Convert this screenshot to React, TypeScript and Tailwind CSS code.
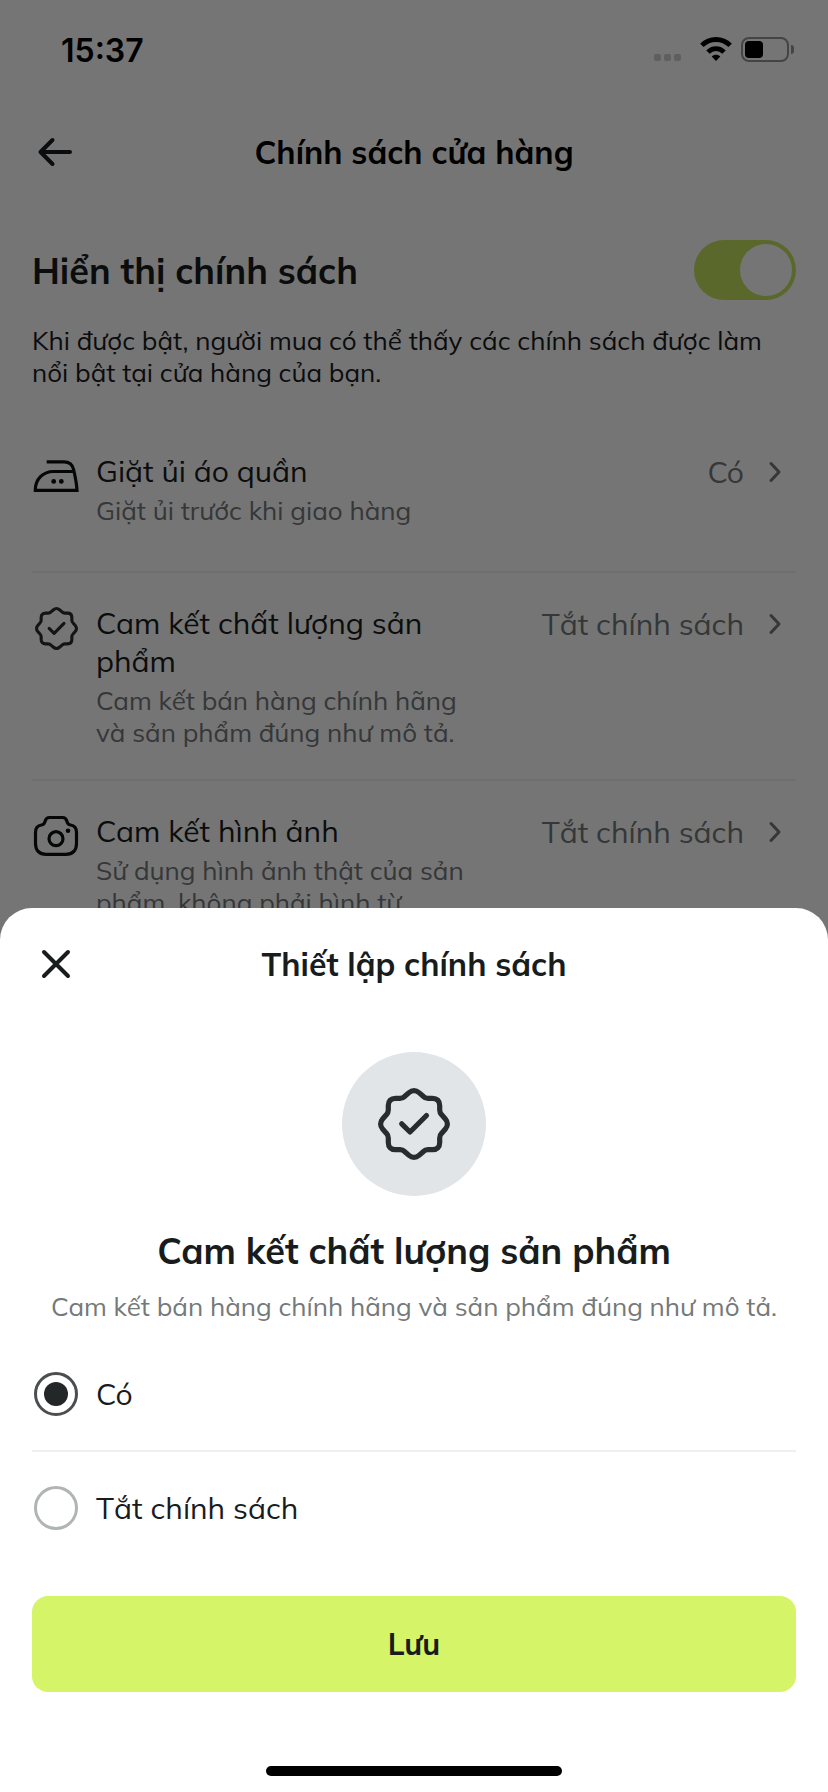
import React, { useState } from 'react';
import clsx from 'clsx';

interface IconProps {
  className?: string;
}

interface Policy {
  id: string;
  title: string;
  description: string;
  value: string;
  icon: React.FC<IconProps>;
}

const BadgeCheckIcon: React.FC<IconProps> = ({ className }) => (
  <svg
    viewBox="0 0 72 72"
    fill="none"
    stroke="currentColor"
    strokeWidth="5.2"
    strokeLinecap="round"
    strokeLinejoin="round"
    className={className}
  >
    <path d="M36 2.6C38 2.6 39.6 3.4 41 4.6L45.2 8.3C46.5 9.6 48 10.3 50 10.3H54.5C59 10.3 61.7 13 61.7 17.5V22C61.7 24 62.4 25.5 63.7 26.8L67.4 31C68.6 32.4 69.4 34 69.4 36C69.4 38 68.6 39.6 67.4 41L63.7 45.2C62.4 46.5 61.7 48 61.7 50V54.5C61.7 59 59 61.7 54.5 61.7H50C48 61.7 46.5 62.4 45.2 63.7L41 67.4C39.6 68.6 38 69.4 36 69.4C34 69.4 32.4 68.6 31 67.4L26.8 63.7C25.5 62.4 24 61.7 22 61.7H17.5C13 61.7 10.3 59 10.3 54.5V50C10.3 48 9.6 46.5 8.3 45.2L4.6 41C3.4 39.6 2.6 38 2.6 36C2.6 34 3.4 32.4 4.6 31L8.3 26.8C9.6 25.5 10.3 24 10.3 22V17.5C10.3 13 13 10.3 17.5 10.3H22C24 10.3 25.5 9.6 26.8 8.3L31 4.6C32.4 3.4 34 2.6 36 2.6Z" />
    <path d="M23.7 35.8L32 44L48.5 27.5" />
  </svg>
);

const SmallBadgeIcon: React.FC<IconProps> = ({ className }) => (
  <span className={clsx('flex items-center justify-center text-[#282c2e]', className)}>
    <BadgeCheckIcon className="h-[43px] w-[43px]" />
  </span>
);

const IronIcon: React.FC<IconProps> = ({ className }) => (
  <svg viewBox="0 0 48 48" fill="none" stroke="currentColor" strokeWidth="3.2" className={className}>
    <path d="M14.7 9.9H32C37 9.9 40.5 12.8 41.6 17.5C43 23.5 44.6 31 45 38.3H3.3C3.3 27 11 19.5 21.5 19.5H42.5" />
    <circle cx="21.7" cy="29.4" r="2.4" fill="currentColor" stroke="none" />
    <circle cx="29.3" cy="29.4" r="2.4" fill="currentColor" stroke="none" />
  </svg>
);

const CameraIcon: React.FC<IconProps> = ({ className }) => (
  <svg viewBox="0 0 48 48" fill="none" stroke="currentColor" strokeWidth="3.2" className={className}>
    <path d="M17.5 5.5H30.5C33 5.5 34.3 7 34.8 9C35.3 11.5 36.5 12.8 38.5 13C42.5 13.5 44.5 16.5 44.5 20.5V31.5C44.5 38.5 40.5 42.3 34 42.3H14C7.5 42.3 3.5 38.5 3.5 31.5V20.5C3.5 16.5 5.5 13.5 9.5 13C11.5 12.8 12.7 11.5 13.2 9C13.7 7 15 5.5 17.5 5.5Z" />
    <circle cx="24" cy="26.7" r="7" />
    <circle cx="36" cy="18.7" r="2.3" fill="currentColor" stroke="none" />
  </svg>
);

const policies: Policy[] = [
  {
    id: 'laundry',
    title: 'Giặt ủi áo quần',
    description: 'Giặt ủi trước khi giao hàng',
    value: 'Có',
    icon: IronIcon,
  },
  {
    id: 'quality',
    title: 'Cam kết chất lượng sản phẩm',
    description: 'Cam kết bán hàng chính hãng và sản phẩm đúng như mô tả.',
    value: 'Tắt chính sách',
    icon: SmallBadgeIcon,
  },
  {
    id: 'photos',
    title: 'Cam kết hình ảnh',
    description: 'Sử dụng hình ảnh thật của sản phẩm, không phải hình từ internet.',
    value: 'Tắt chính sách',
    icon: CameraIcon,
  },
];

const options = ['Có', 'Tắt chính sách'];

const StatusBar: React.FC = () => (
  <div className="flex h-[98px] items-center justify-between pr-[34px] pl-[61px] text-black">
    <span className="pt-[3px] font-['Inter',sans-serif] text-[32px] leading-none font-semibold">15:37</span>
    <div className="flex items-center">
      <div className="mt-[17px] mr-[19px] flex gap-[3px]">
        <span className="h-[7px] w-[7px] rounded-[2px] bg-[#cfcfcf]" />
        <span className="h-[7px] w-[7px] rounded-[2px] bg-[#cfcfcf]" />
        <span className="h-[7px] w-[7px] rounded-[2px] bg-[#cfcfcf]" />
      </div>
      <svg viewBox="0 0 32 24" fill="none" stroke="currentColor" strokeWidth="4.8" className="mr-[9px] h-6 w-8">
        <path d="M1.9 8.4A19.8 19.8 0 0 1 30.1 8.4" />
        <path d="M8 15.2A10.9 10.9 0 0 1 24 15.2" />
        <path d="M16 24L11.7 19.5C14 17 18 17 20.3 19.5Z" fill="currentColor" stroke="none" />
      </svg>
      <div className="flex h-[25px] w-12 items-center rounded-[8px] border-2 border-[#959595] p-[2px]">
        <span className="h-[17px] w-[18px] rounded-[4px] bg-black" />
      </div>
      <span className="ml-[2px] h-[9px] w-[3px] rounded-r-full bg-[#959595]" />
    </div>
  </div>
);

const PolicyRow: React.FC<{ policy: Policy; first?: boolean }> = ({ policy, first }) => {
  const Icon = policy.icon;
  return (
    <div
      className={clsx(
        'flex items-start gap-4 border-b-2 border-[#efefef] pb-[30px]',
        first ? 'min-h-[121px]' : 'pt-[31px]'
      )}
    >
      <Icon className="h-12 w-12 shrink-0 text-[#0d0e0f]" />
      <div className="w-[380px]">
        <h3 className="text-[30px] leading-[38px] text-[#1a1d1e]">{policy.title}</h3>
        <p className="mt-[5px] text-[26px] leading-8 text-[#74797a]">{policy.description}</p>
      </div>
      <div className="ml-auto flex h-10 items-center gap-4 pr-1 text-[#74797a]">
        <span className="text-[30px] leading-10 whitespace-nowrap">{policy.value}</span>
        <svg
          viewBox="0 0 32 32"
          fill="none"
          stroke="currentColor"
          strokeWidth="3"
          strokeLinecap="round"
          strokeLinejoin="round"
          className="h-8 w-8"
        >
          <path d="M11 7.5L19 16L11 24.5" />
        </svg>
      </div>
    </div>
  );
};

const PolicySheet: React.FC = () => {
  const [selected, setSelected] = useState(options[0]);

  return (
    <div
      className="absolute inset-x-0 bottom-0 h-[884px] rounded-t-[32px] bg-white px-8 text-[#191c1d]"
      role="dialog"
      aria-modal="true"
      aria-labelledby="sheet-title"
    >
      <div className="grid h-28 grid-cols-[48px_1fr_48px] items-center">
        <button type="button" aria-label="Đóng">
          <svg viewBox="0 0 48 48" fill="none" stroke="currentColor" strokeWidth="4" strokeLinecap="round" className="h-12 w-12">
            <path d="M12 12L36 36M36 12L12 36" />
          </svg>
        </button>
        <h2 id="sheet-title" className="text-center text-[32px] leading-10 font-bold">
          Thiết lập chính sách
        </h2>
      </div>

      <div className="mx-auto mt-8 flex h-36 w-36 items-center justify-center rounded-full bg-[#e1e5e8] text-[#282c2e]">
        <BadgeCheckIcon className="h-[72px] w-[72px]" />
      </div>
      <h1 className="mt-[33px] text-center text-[36px] leading-[44px] font-bold">Cam kết chất lượng sản phẩm</h1>
      <p className="mt-[18px] text-center text-[26px] leading-8 text-[#74797a]">
        Cam kết bán hàng chính hãng và sản phẩm đúng như mô tả.
      </p>

      <div className="mt-[15px] divide-y-2 divide-[#eeefef]" role="radiogroup">
        {options.map((option) => {
          const active = option === selected;
          return (
            <div key={option} className="py-8 pl-[2px]">
              <button
                type="button"
                role="radio"
                aria-checked={active}
                onClick={() => setSelected(option)}
                className="flex h-12 w-full items-center gap-[18px] text-[30px]"
              >
                <span
                  className={clsx(
                    'flex h-11 w-11 items-center justify-center rounded-full border-3',
                    active ? 'border-[#4c4e4f]' : 'border-[#b1b4b5]'
                  )}
                >
                  {active && <span className="h-6 w-6 rounded-full bg-[#232728]" />}
                </span>
                {option}
              </button>
            </div>
          );
        })}
      </div>

      <button type="button" className="mt-8 h-24 w-full rounded-2xl bg-[#d5f467] text-[30px] font-bold">
        Lưu
      </button>
      <div className="mx-auto mt-[74px] h-[10px] w-[296px] rounded-full bg-black" />
    </div>
  );
};

export default function App() {
  return (
    <div className="relative h-[1792px] w-[828px] overflow-hidden bg-white font-['Mulish','Inter',sans-serif]">
      <StatusBar />

      {/* Page header */}
      <div className="grid h-[108px] grid-cols-[48px_1fr_48px] items-center px-8">
        <button type="button" aria-label="Quay lại" className="text-[#191c1d]">
          <svg
            viewBox="0 0 48 48"
            fill="none"
            stroke="currentColor"
            strokeWidth="4"
            strokeLinecap="round"
            strokeLinejoin="round"
            className="h-12 w-12"
          >
            <path d="M38 24H8.5M20.5 12L8.5 24L20.5 36" />
          </svg>
        </button>
        <h1 className="text-center text-[32px] leading-10 font-bold text-black">Chính sách cửa hàng</h1>
      </div>

      <div className="px-8 pt-[34px]">
        <div className="flex h-[60px] items-center justify-between">
          <h2 className="pt-[2px] text-[36px] leading-[44px] font-bold text-[#191c1d]">Hiển thị chính sách</h2>
          <div className="flex h-[60px] w-[102px] items-center justify-end rounded-full bg-[#c4e25f] p-1">
            <span className="h-[52px] w-[52px] rounded-full bg-white" />
          </div>
        </div>
        <p className="mt-[25px] text-[26px] leading-8 text-[#191c1d]">
          Khi được bật, người mua có thể thấy các chính sách được làm nổi bật tại cửa hàng của bạn.
        </p>

        <div className="mt-[63px]">
          {policies.map((policy, i) => (
            <PolicyRow key={policy.id} policy={policy} first={i === 0} />
          ))}
        </div>
      </div>

      {/* Backdrop */}
      <div className="absolute inset-0 bg-black/54" />
      <PolicySheet />
    </div>
  );
}
